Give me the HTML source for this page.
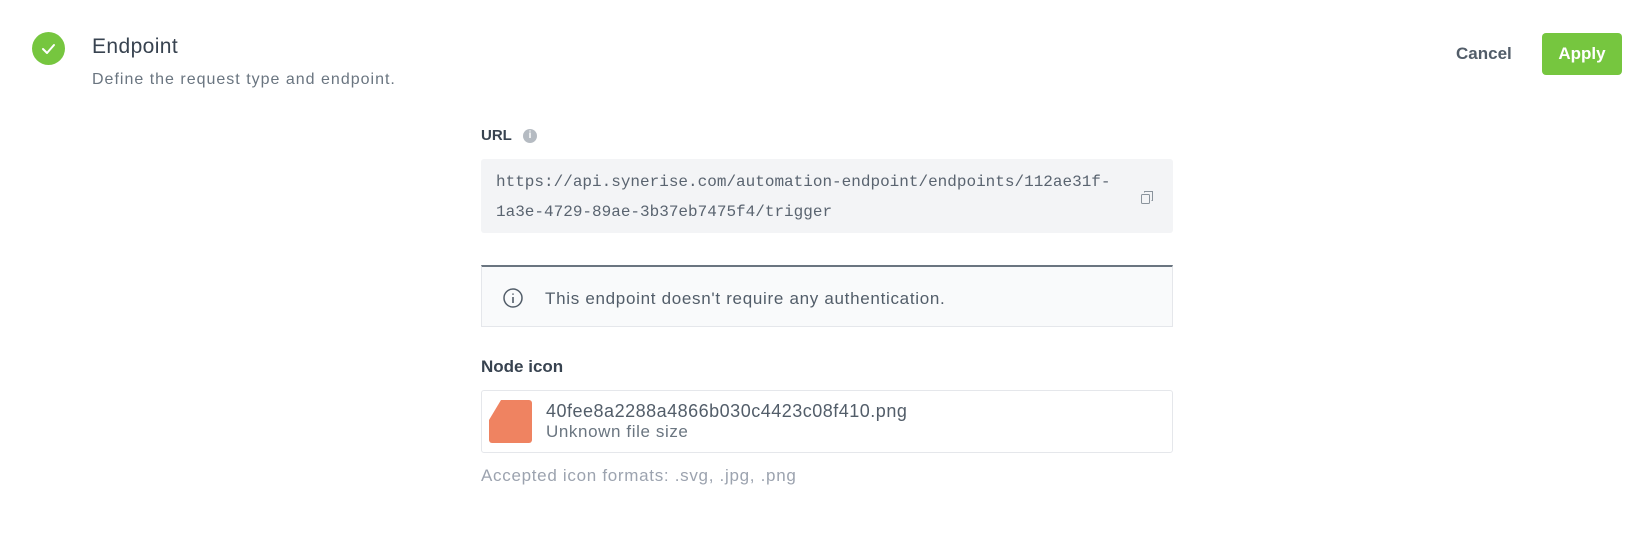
<!DOCTYPE html>
<html><head><meta charset="utf-8"><style>
*{margin:0;padding:0;box-sizing:border-box}
body{width:1652px;height:544px;background:#fff;font-family:"Liberation Sans",sans-serif;position:relative;overflow:hidden;color:#384350}
.a{position:absolute;white-space:nowrap}
</style></head><body>
<div class="a" style="left:32px;top:32px;width:33px;height:33px;border-radius:50%;background:#76c63f">
<svg width="33" height="33" viewBox="0 0 33 33"><path d="M11 17l4 4 7-8" fill="none" stroke="#fff" stroke-width="2" stroke-linecap="round" stroke-linejoin="round"/></svg></div>
<div class="a" style="left:92px;top:35px;font-size:21px;letter-spacing:0.4px;color:#384350">Endpoint</div>
<div class="a" style="left:92px;top:71px;font-size:16px;letter-spacing:1px;color:#6a7580">Define the request type and endpoint.</div>
<div class="a" style="left:1456px;top:44px;font-size:17px;color:#525d69;font-weight:bold">Cancel</div>
<div class="a" style="left:1542px;top:33px;width:80px;height:42px;border-radius:4px;background:#76c63f;color:#fff;font-size:17px;font-weight:bold;text-align:center;line-height:42px">Apply</div>
<div class="a" style="left:481px;top:127px;font-size:15px;font-weight:bold;color:#384350">URL</div>
<div class="a" style="left:523px;top:129px;width:14px;height:14px;border-radius:50%;background:#b5bbc2;color:#fff;font-size:10px;font-weight:bold;text-align:center;line-height:14px">i</div>
<div class="a" style="left:481px;top:159px;width:692px;height:74px;background:#f3f4f6;border-radius:3px"></div>
<div class="a" style="left:496px;top:167px;font-family:'Liberation Mono',monospace;font-size:16px;line-height:30px;color:#5a6470">https://api.synerise.com/automation-endpoint/endpoints/112ae31f-<br>1a3e-4729-89ae-3b37eb7475f4/trigger</div>
<svg class="a" style="left:1139px;top:189px" width="16" height="16" viewBox="0 0 16 16"><rect x="2.5" y="5.5" width="8" height="9" rx="1" fill="none" stroke="#8a939c"/><path d="M5.5 3.5V2.5h8v9h-1" fill="none" stroke="#8a939c"/></svg>
<div class="a" style="left:481px;top:265px;width:692px;height:62px;background:#f9fafb;border:1px solid #e5e7eb;border-top:2px solid #6a7580"></div>
<svg class="a" style="left:502px;top:287px" width="22" height="22" viewBox="0 0 22 22"><circle cx="11" cy="11" r="9" fill="none" stroke="#525d69" stroke-width="1.5"/><path d="M11 10v6M11 6.5v1.2" stroke="#525d69" stroke-width="1.6"/></svg>
<div class="a" style="left:545px;top:289px;font-size:17px;letter-spacing:0.7px;color:#525d69">This endpoint doesn't require any authentication.</div>
<div class="a" style="left:481px;top:357px;font-size:17px;font-weight:bold;color:#384350">Node icon</div>
<div class="a" style="left:481px;top:390px;width:692px;height:63px;border:1px solid #e5e7eb;border-radius:3px"></div>
<svg class="a" style="left:489px;top:400px" width="44" height="44" viewBox="0 0 44 44"><path d="M12 0H40a3 3 0 0 1 3 3V40a3 3 0 0 1-3 3H3a3 3 0 0 1-3-3V20Z" fill="#ef8361"/></svg>
<div class="a" style="left:546px;top:401px;font-size:18px;letter-spacing:0.5px;color:#525d69">40fee8a2288a4866b030c4423c08f410.png</div>
<div class="a" style="left:546px;top:422px;font-size:17px;letter-spacing:0.6px;color:#6a7580">Unknown file size</div>
<div class="a" style="left:481px;top:466px;font-size:17px;letter-spacing:0.7px;color:#9ca3af">Accepted icon formats: .svg, .jpg, .png</div>
</body></html>
